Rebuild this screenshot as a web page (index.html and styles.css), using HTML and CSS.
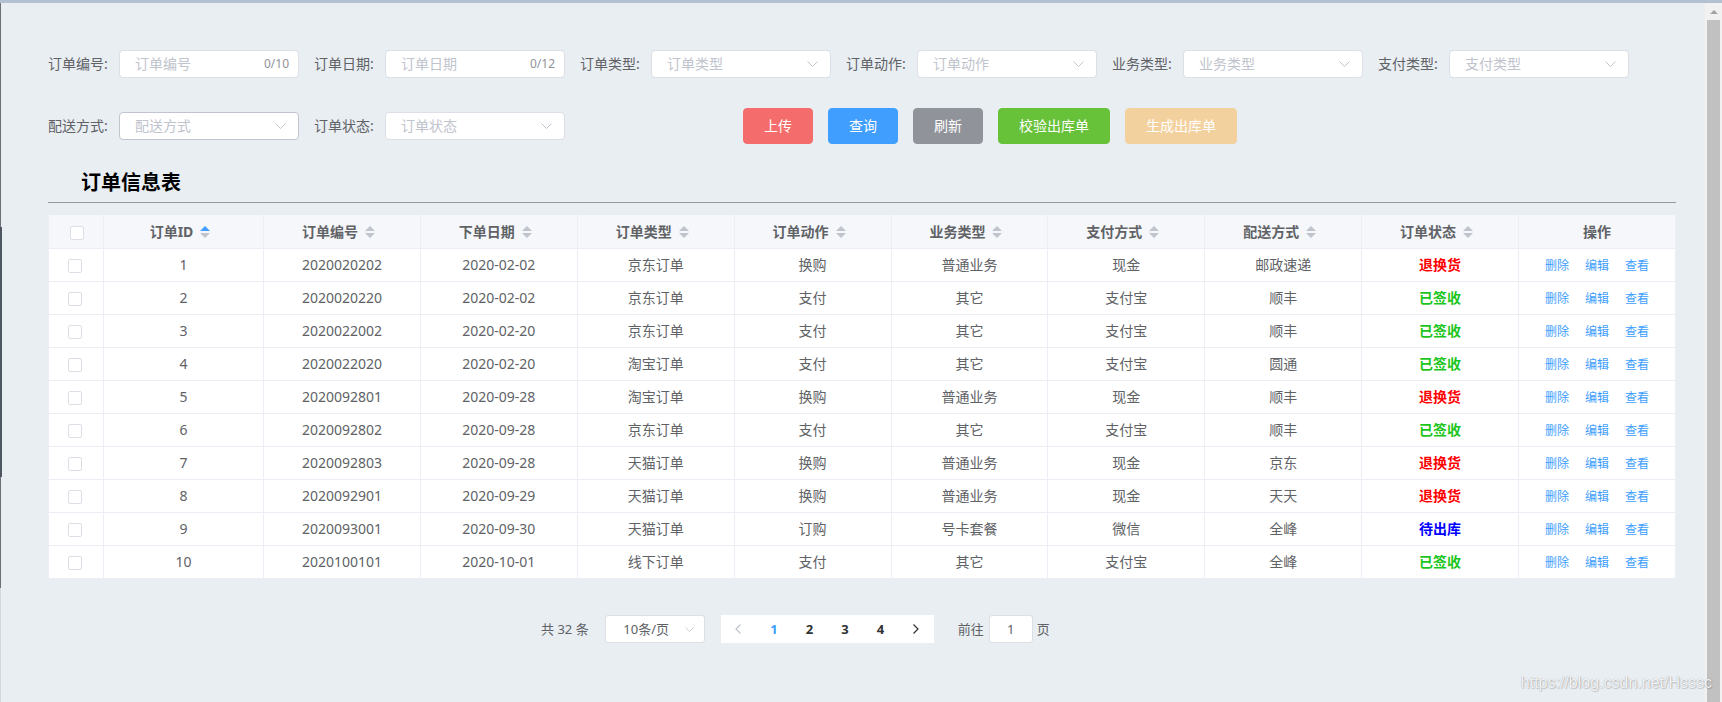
FILE: index.html
```html
<!DOCTYPE html>
<html lang="zh-CN">
<head>
<meta charset="utf-8">
<title>订单信息表</title>
<link rel="stylesheet" href="styles.css">
</head>
<body>
<div class="page">
  <div class="topbar"></div>
  <div class="shell">
    <main class="content">
      <div class="form-row row1">
        <div class="form-item"><label class="form-label">订单编号:</label><div class="field input"><span class="ph">订单编号</span><span class="count">0/10</span></div></div>
        <div class="form-item"><label class="form-label">订单日期:</label><div class="field input"><span class="ph">订单日期</span><span class="count">0/12</span></div></div>
        <div class="form-item"><label class="form-label">订单类型:</label><div class="field select"><span class="ph">订单类型</span><svg class="arrow" viewBox="0 0 11 6"><polyline points="0.5,0.5 5.5,5.5 10.5,0.5"/></svg></div></div>
        <div class="form-item"><label class="form-label">订单动作:</label><div class="field select"><span class="ph">订单动作</span><svg class="arrow" viewBox="0 0 11 6"><polyline points="0.5,0.5 5.5,5.5 10.5,0.5"/></svg></div></div>
        <div class="form-item"><label class="form-label">业务类型:</label><div class="field select"><span class="ph">业务类型</span><svg class="arrow" viewBox="0 0 11 6"><polyline points="0.5,0.5 5.5,5.5 10.5,0.5"/></svg></div></div>
        <div class="form-item"><label class="form-label">支付类型:</label><div class="field select"><span class="ph">支付类型</span><svg class="arrow" viewBox="0 0 11 6"><polyline points="0.5,0.5 5.5,5.5 10.5,0.5"/></svg></div></div>
      </div>
      <div class="form-row row2">
        <div class="form-item"><label class="form-label">配送方式:</label><div class="field select hover"><span class="ph">配送方式</span><svg class="arrow" viewBox="0 0 11 6"><polyline points="0.5,0.5 5.5,5.5 10.5,0.5"/></svg></div></div>
        <div class="form-item"><label class="form-label">订单状态:</label><div class="field select"><span class="ph">订单状态</span><svg class="arrow" viewBox="0 0 11 6"><polyline points="0.5,0.5 5.5,5.5 10.5,0.5"/></svg></div></div>
        <div class="btn-group">
          <button class="btn btn-danger">上传</button>
          <button class="btn btn-primary">查询</button>
          <button class="btn btn-info">刷新</button>
          <button class="btn btn-success">校验出库单</button>
          <button class="btn btn-warning-disabled">生成出库单</button>
        </div>
      </div>

      <h2 class="title">订单信息表</h2>

      <table class="grid">
        <colgroup><col class="c-check"><col class="c-id"><col span="9"></colgroup>
        <thead>
          <tr>
            <th><span class="cb"></span></th>
            <th>订单ID<span class="caret"><i class="up active"></i><i class="down"></i></span></th>
            <th>订单编号<span class="caret"><i class="up"></i><i class="down"></i></span></th>
            <th>下单日期<span class="caret"><i class="up"></i><i class="down"></i></span></th>
            <th>订单类型<span class="caret"><i class="up"></i><i class="down"></i></span></th>
            <th>订单动作<span class="caret"><i class="up"></i><i class="down"></i></span></th>
            <th>业务类型<span class="caret"><i class="up"></i><i class="down"></i></span></th>
            <th>支付方式<span class="caret"><i class="up"></i><i class="down"></i></span></th>
            <th>配送方式<span class="caret"><i class="up"></i><i class="down"></i></span></th>
            <th>订单状态<span class="caret"><i class="up"></i><i class="down"></i></span></th>
            <th>操作</th>
          </tr>
        </thead>
        <tbody>
          <tr><td><span class="cb"></span></td><td>1</td><td>2020020202</td><td>2020-02-02</td><td>京东订单</td><td>换购</td><td>普通业务</td><td>现金</td><td>邮政速递</td><td><span class="st red">退换货</span></td><td class="ops"><a>删除</a><a>编辑</a><a>查看</a></td></tr>
          <tr><td><span class="cb"></span></td><td>2</td><td>2020020220</td><td>2020-02-02</td><td>京东订单</td><td>支付</td><td>其它</td><td>支付宝</td><td>顺丰</td><td><span class="st green">已签收</span></td><td class="ops"><a>删除</a><a>编辑</a><a>查看</a></td></tr>
          <tr><td><span class="cb"></span></td><td>3</td><td>2020022002</td><td>2020-02-20</td><td>京东订单</td><td>支付</td><td>其它</td><td>支付宝</td><td>顺丰</td><td><span class="st green">已签收</span></td><td class="ops"><a>删除</a><a>编辑</a><a>查看</a></td></tr>
          <tr><td><span class="cb"></span></td><td>4</td><td>2020022020</td><td>2020-02-20</td><td>淘宝订单</td><td>支付</td><td>其它</td><td>支付宝</td><td>圆通</td><td><span class="st green">已签收</span></td><td class="ops"><a>删除</a><a>编辑</a><a>查看</a></td></tr>
          <tr><td><span class="cb"></span></td><td>5</td><td>2020092801</td><td>2020-09-28</td><td>淘宝订单</td><td>换购</td><td>普通业务</td><td>现金</td><td>顺丰</td><td><span class="st red">退换货</span></td><td class="ops"><a>删除</a><a>编辑</a><a>查看</a></td></tr>
          <tr><td><span class="cb"></span></td><td>6</td><td>2020092802</td><td>2020-09-28</td><td>京东订单</td><td>支付</td><td>其它</td><td>支付宝</td><td>顺丰</td><td><span class="st green">已签收</span></td><td class="ops"><a>删除</a><a>编辑</a><a>查看</a></td></tr>
          <tr><td><span class="cb"></span></td><td>7</td><td>2020092803</td><td>2020-09-28</td><td>天猫订单</td><td>换购</td><td>普通业务</td><td>现金</td><td>京东</td><td><span class="st red">退换货</span></td><td class="ops"><a>删除</a><a>编辑</a><a>查看</a></td></tr>
          <tr><td><span class="cb"></span></td><td>8</td><td>2020092901</td><td>2020-09-29</td><td>天猫订单</td><td>换购</td><td>普通业务</td><td>现金</td><td>天天</td><td><span class="st red">退换货</span></td><td class="ops"><a>删除</a><a>编辑</a><a>查看</a></td></tr>
          <tr><td><span class="cb"></span></td><td>9</td><td>2020093001</td><td>2020-09-30</td><td>天猫订单</td><td>订购</td><td>号卡套餐</td><td>微信</td><td>全峰</td><td><span class="st blue">待出库</span></td><td class="ops"><a>删除</a><a>编辑</a><a>查看</a></td></tr>
          <tr><td><span class="cb"></span></td><td>10</td><td>2020100101</td><td>2020-10-01</td><td>线下订单</td><td>支付</td><td>其它</td><td>支付宝</td><td>全峰</td><td><span class="st green">已签收</span></td><td class="ops"><a>删除</a><a>编辑</a><a>查看</a></td></tr>
        </tbody>
      </table>

      <div class="pagination">
        <span class="total">共 32 条</span>
        <div class="sizes"><span class="sizes-text">10条/页</span><span class="sizes-suffix"><svg class="arrow" viewBox="0 0 11 6"><polyline points="0.5,0.5 5.5,5.5 10.5,0.5"/></svg></span></div>
        <ul class="pager">
          <li class="nav disabled"><svg viewBox="0 0 6 10"><polyline points="5.5,0.5 1,5 5.5,9.5"/></svg></li>
          <li class="num active">1</li>
          <li class="num">2</li>
          <li class="num">3</li>
          <li class="num">4</li>
          <li class="nav"><svg viewBox="0 0 6 10"><polyline points="0.5,0.5 5,5 0.5,9.5"/></svg></li>
        </ul>
        <span class="jump">前往<span class="jump-input">1</span>页</span>
      </div>
    </main>
    <aside class="scrollbar">
      <div class="sb-arrow"><i></i></div>
      <div class="sb-thumb"></div>
    </aside>
  </div>
  <div class="watermark">https://blog.csdn.net/Hsssc</div>
</div>
</body>
</html>
```

FILE: styles.css
```css
html, body {
  margin: 0;
  padding: 0;
}
body {
  background: #e9eef3;
  font-family: "Noto Sans", "Noto Sans CJK SC", sans-serif;
  font-size: 14px;
  color: #606266;
  overflow: hidden;
}
.page {
  position: relative;
  width: 1722px;
  height: 702px;
  overflow: hidden;
}
.topbar {
  height: 3px;
  background: #b3c0d1;
}
.shell {
  display: flex;
  height: 699px;
}
.content {
  flex: 1;
  min-width: 0;
  box-sizing: border-box;
  padding: 47px 29px 0 48px;
  background-color: #e9eef3;
  background-image:
    linear-gradient(to bottom, #6d7176 0, #6d7176 224px, #4e5761 224px, #4e5761 474px, #6d7176 474px, #6d7176 585px, #d0d8e2 585px, #d0d8e2 100%),
    linear-gradient(#4e5761, #4e5761);
  background-size: 1px 100%, 1px 250px;
  background-position: 0 0, 1px 224px;
  background-repeat: no-repeat;
}

/* ---------- form ---------- */
.form-row {
  display: flex;
  align-items: center;
}
.row1 { height: 28px; }
.row2 { height: 36px; margin-top: 30px; }
.form-item {
  display: flex;
  align-items: center;
  margin-right: 15px;
}
.form-label {
  width: 71px;
  box-sizing: border-box;
  padding-right: 12px;
  font-size: 14px;
  line-height: 28px;
  color: #606266;
  white-space: nowrap;
}
.field {
  width: 180px;
  height: 28px;
  box-sizing: border-box;
  border: 1px solid #dcdfe6;
  border-radius: 4px;
  background: #fff;
  display: flex;
  align-items: center;
  padding: 0 9px 0 15px;
  font-size: 14px;
  line-height: 26px;
}
.field.select { padding-right: 12px; }
.field.hover { border-color: #c0c4cc; }
.ph { color: #c0c4cc; white-space: nowrap; }
.count {
  margin-left: auto;
  font-size: 12px;
  color: #909399;
}
.arrow {
  margin-left: auto;
  width: 11px;
  height: 6px;
  fill: none;
  stroke: #c0c4cc;
  stroke-width: 1;
}

.btn-group {
  display: flex;
  gap: 15px;
  margin-left: 163px;
}
.btn {
  height: 36px;
  box-sizing: border-box;
  padding: 0 20px;
  border: 1px solid transparent;
  border-radius: 4px;
  font-family: inherit;
  font-size: 14px;
  line-height: 34px;
  color: #fff;
  white-space: nowrap;
}
.btn-danger { background: #f56c6c; border-color: #f56c6c; }
.btn-primary { background: #409eff; border-color: #409eff; }
.btn-info { background: #909399; border-color: #909399; }
.btn-success { background: #67c23a; border-color: #67c23a; }
.btn-warning-disabled { background: #f3d19e; border-color: #f3d19e; }

/* ---------- title ---------- */
.title {
  margin: 25px 0 0;
  padding: 0 0 5px 33px;
  font-size: 20px;
  font-weight: 700;
  line-height: 28px;
  color: #000;
  border-bottom: 1px solid #999;
}

/* ---------- table ---------- */
.grid {
  margin-top: 12px;
  width: 1628px;
  table-layout: fixed;
  border-collapse: separate;
  border-spacing: 0;
  background: #fff;
  border-left: 1px solid #ebeef5;
}
.c-check { width: 55px; }
.c-id { width: 160px; }
.grid thead tr { height: 34px; }
.grid tbody tr { height: 33px; }
.grid th,
.grid td {
  padding: 0;
  text-align: center;
  vertical-align: middle;
  border-right: 1px solid #ebeef5;
  border-bottom: 1px solid #ebeef5;
  white-space: nowrap;
  overflow: hidden;
  line-height: 20px;
  font-size: 14px;
}
.grid th {
  background: #f5f7fa;
  font-weight: 700;
  color: #606266;
}
.grid td {
  color: #606266;
}
.cb {
  display: inline-block;
  width: 14px;
  height: 14px;
  box-sizing: border-box;
  border: 1px solid #dcdfe6;
  border-radius: 2px;
  background: #fff;
  vertical-align: middle;
}
.grid th .cb { margin-left: 2px; }
.grid td .cb { margin-right: 2px; }
.caret {
  display: inline-flex;
  flex-direction: column;
  align-items: center;
  justify-content: center;
  gap: 2px;
  width: 24px;
  height: 14px;
  vertical-align: middle;
  margin-top: -2px;
}
.caret i {
  display: block;
  width: 0;
  height: 0;
  border-left: 5px solid transparent;
  border-right: 5px solid transparent;
}
.caret .up { border-bottom: 5px solid #c0c4cc; }
.caret .down { border-top: 5px solid #c0c4cc; }
.caret .up.active { border-bottom-color: #409eff; }

.st { font-weight: 700; }
.st.red { color: #ff0000; }
.st.green { color: #1cc51c; }
.st.blue { color: #0000ff; }

.ops a {
  color: #409eff;
  font-size: 12px;
  margin: 0 8px;
  cursor: pointer;
}

/* ---------- pagination ---------- */
.pagination {
  display: flex;
  align-items: center;
  height: 28px;
  margin-top: 36px;
  margin-left: 493px;
  font-size: 13px;
  color: #303133;
}
.total {
  color: #606266;
  margin-right: 16px;
  white-space: nowrap;
  line-height: 28px;
}
.sizes {
  width: 100px;
  height: 28px;
  box-sizing: border-box;
  border: 1px solid #dcdfe6;
  border-radius: 3px;
  background: #fff;
  display: flex;
  align-items: center;
  padding-left: 8px;
  color: #606266;
}
.sizes-text {
  flex: 1;
  text-align: center;
  line-height: 26px;
  white-space: nowrap;
}
.sizes-suffix {
  width: 25px;
  display: flex;
  align-items: center;
  justify-content: center;
}
.sizes-suffix .arrow { margin: 0 4px 0 0; width: 9px; height: 5px; }
.pager {
  list-style: none;
  margin: 0 0 0 16px;
  padding: 0;
  display: flex;
  background: #fff;
  height: 28px;
}
.pager li {
  width: 35.5px;
  height: 28px;
  line-height: 28px;
  text-align: center;
  font-weight: 700;
  font-size: 13px;
  color: #303133;
  display: flex;
  align-items: center;
  justify-content: center;
}
.pager li.active { color: #409eff; }
.pager li svg {
  width: 6px;
  height: 10px;
  fill: none;
  stroke: #303133;
  stroke-width: 1.2;
}
.pager li.disabled svg { stroke: #c0c4cc; }
.jump {
  margin-left: 24px;
  display: flex;
  align-items: center;
  color: #606266;
  white-space: nowrap;
  line-height: 28px;
}
.jump-input {
  width: 44px;
  height: 28px;
  box-sizing: border-box;
  margin: 0 4px 0 5px;
  border: 1px solid #dcdfe6;
  border-radius: 3px;
  background: #fff;
  text-align: center;
  line-height: 26px;
  color: #606266;
}

/* ---------- scrollbar ---------- */
.scrollbar {
  width: 17px;
  background: #f1f1f1;
  display: flex;
  flex-direction: column;
}
.sb-arrow {
  height: 17px;
  display: flex;
  align-items: center;
  justify-content: center;
}
.sb-arrow i {
  display: block;
  width: 0;
  height: 0;
  border-left: 4px solid transparent;
  border-right: 4px solid transparent;
  border-bottom: 4px solid #a3a3a3;
}
.sb-thumb {
  flex: 1;
  margin: 0 2px;
  background: #c1c1c1;
}

/* ---------- watermark ---------- */
.watermark {
  position: absolute;
  right: 10px;
  bottom: 9px;
  font-family: "Liberation Sans", Arial, sans-serif;
  font-size: 16px;
  line-height: 20px;
  color: rgba(255, 255, 255, 0.9);
  text-shadow: 0 0 1px rgba(0, 0, 0, 0.35), 1px 1px 1px rgba(0, 0, 0, 0.15);
  white-space: nowrap;
}
```
